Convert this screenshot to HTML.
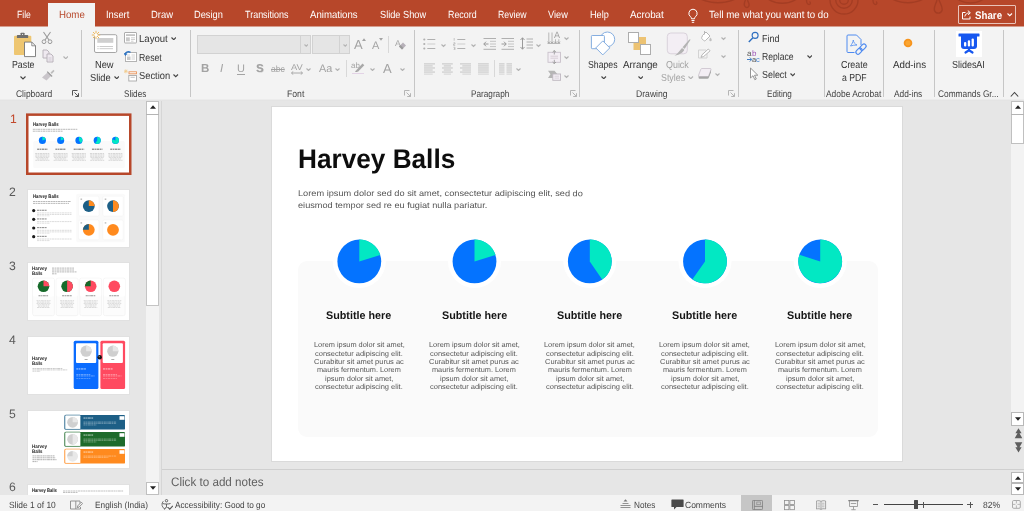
<!DOCTYPE html>
<html lang="en">
<head>
<meta charset="utf-8">
<title>Harvey Balls - PowerPoint</title>
<style>
*{box-sizing:border-box;margin:0;padding:0}
html,body{width:1024px;height:511px;overflow:hidden;background:#e6e6e6}
#app{position:relative;width:1024px;height:511px;overflow:hidden;font-family:"Liberation Sans",sans-serif;will-change:transform}
.a{position:absolute;display:block}
.x{position:absolute;white-space:pre;line-height:1;transform-origin:0 0}
</style>
</head>
<body>
<div id="app">
<div class="a" style="left:0px;top:0px;width:1024px;height:27px;background:#b7472a;"></div>
<svg class="a" style="left:640px;top:0px" width="384" height="27" viewBox="0 0 384 27"><g fill="none" stroke="#a03b22" stroke-width="1.400" opacity="0.800"><circle cx="78" cy="-38.900" r="41.600"/><path d="M105.500 0c-1.500 3-2 5.500 0 7s4-.5 3.500-3c-.3-1.500-1.300-3-1.500-4"/><circle cx="142.300" cy="-23.400" r="26.600"/><path d="M166.500 0c0 2.500 1 4.500 2.500 4.500s2-2 .5-3"/><circle cx="204" cy="0" r="14"/><circle cx="204" cy="0" r="8.300"/><circle cx="204" cy="0" r="4.300"/><path d="M233 0c0 2.500 1 4.500 2.500 4.500s2-2 .5-3"/><circle cx="267.800" cy="-31.200" r="33.900"/><path d="M297 0c-1 4-3.500 7-2.500 10.500 1 3.500 6.500 3.500 7.500 0 1-3.500-1.500-6.500-3-10.500"/><circle cx="330.500" cy="-20.500" r="23.500"/></g></svg>
<div class="a" style="left:0px;top:26px;width:1024px;height:1px;background:#d59d8e;"></div>
<div class="a" style="left:48px;top:3px;width:47px;height:25px;background:#f3f3f3;"></div>
<span class="x" style="left:16.6px;top:9.55px;font-size:10.4px;color:#fff;transform:scaleX(0.824) rotate(.03deg);">File</span>
<span class="x" style="left:58.5px;top:9.55px;font-size:10.4px;color:#b7472a;transform:scaleX(0.931) rotate(.03deg);">Home</span>
<span class="x" style="left:105.7px;top:9.55px;font-size:10.4px;color:#fff;transform:scaleX(0.896) rotate(.03deg);">Insert</span>
<span class="x" style="left:150.5px;top:9.55px;font-size:10.4px;color:#fff;transform:scaleX(0.907) rotate(.03deg);">Draw</span>
<span class="x" style="left:194.2px;top:9.55px;font-size:10.4px;color:#fff;transform:scaleX(0.890) rotate(.03deg);">Design</span>
<span class="x" style="left:244.7px;top:9.55px;font-size:10.4px;color:#fff;transform:scaleX(0.864) rotate(.03deg);">Transitions</span>
<span class="x" style="left:310.2px;top:9.55px;font-size:10.4px;color:#fff;transform:scaleX(0.926) rotate(.03deg);">Animations</span>
<span class="x" style="left:379.7px;top:9.55px;font-size:10.4px;color:#fff;transform:scaleX(0.887) rotate(.03deg);">Slide Show</span>
<span class="x" style="left:447.7px;top:9.55px;font-size:10.4px;color:#fff;transform:scaleX(0.854) rotate(.03deg);">Record</span>
<span class="x" style="left:498.2px;top:9.55px;font-size:10.4px;color:#fff;transform:scaleX(0.839) rotate(.03deg);">Review</span>
<span class="x" style="left:548.2px;top:9.55px;font-size:10.4px;color:#fff;transform:scaleX(0.886) rotate(.03deg);">View</span>
<span class="x" style="left:589.7px;top:9.55px;font-size:10.4px;color:#fff;transform:scaleX(0.880) rotate(.03deg);">Help</span>
<span class="x" style="left:630.2px;top:9.55px;font-size:10.4px;color:#fff;transform:scaleX(0.944) rotate(.03deg);">Acrobat</span>
<span class="x" style="left:708.9px;top:9.55px;font-size:10.4px;color:#fff;transform:scaleX(0.933) rotate(.03deg);">Tell me what you want to do</span>
<svg class="a" style="left:687.3px;top:7.5px" width="12" height="16" viewBox="0 0 12 16"><path d="M6 1.2a4.2 4.2 0 0 0-2.4 7.6c.6.5.9 1.2.9 2h3c0-.8.3-1.5.9-2A4.2 4.2 0 0 0 6 1.2zM4.5 12.5h3M4.8 14.3h2.4" fill="none" stroke="#fff" stroke-width="1"/></svg>
<div class="a" style="left:958px;top:5px;width:58px;height:19px;background:transparent;border:1px solid #e9c3b9;border-radius:1px"></div>
<svg class="a" style="left:962px;top:10px" width="10" height="10" viewBox="0 0 10 10"><path d="M3.500 2.500H0.500v6.500h7.500V6.500M2.800 6.500c0.500-2.200 2-3.500 4.700-3.700M5.800 0.600L8.300 2.700 6.200 5" fill="none" stroke="#fff" stroke-width="1"/></svg>
<span class="x" style="left:974.7px;top:9.75px;font-size:11px;color:#fff;font-weight:700;transform:scaleX(0.886) rotate(.03deg);">Share</span>
<svg class="a" style="left:1007px;top:13px" width="5.5" height="3.75" viewBox="-0.5 -0.5 5.5 3.75"><path d="M0 0L2.25 2.25L4.5 0" fill="none" stroke="#fff" stroke-width="1.1"/></svg>
<div class="a" style="left:0px;top:27px;width:1024px;height:72px;background:#f3f3f3;"></div>
<div class="a" style="left:0px;top:99px;width:1024px;height:1px;background:#ececec;"></div>
<div class="a" style="left:81px;top:30px;width:1px;height:67px;background:#c6c6c6;"></div>
<div class="a" style="left:190px;top:30px;width:1px;height:67px;background:#c6c6c6;"></div>
<div class="a" style="left:414px;top:30px;width:1px;height:67px;background:#c6c6c6;"></div>
<div class="a" style="left:579px;top:30px;width:1px;height:67px;background:#c6c6c6;"></div>
<div class="a" style="left:738px;top:30px;width:1px;height:67px;background:#c6c6c6;"></div>
<div class="a" style="left:824px;top:30px;width:1px;height:67px;background:#c6c6c6;"></div>
<div class="a" style="left:883px;top:30px;width:1px;height:67px;background:#c6c6c6;"></div>
<div class="a" style="left:934px;top:30px;width:1px;height:67px;background:#c6c6c6;"></div>
<div class="a" style="left:1003px;top:30px;width:1px;height:67px;background:#c6c6c6;"></div>
<span class="x" style="left:15.7px;top:88.95px;font-size:9.6px;color:#444;transform:scaleX(0.884) rotate(.03deg);">Clipboard</span>
<span class="x" style="left:124.2px;top:88.95px;font-size:9.6px;color:#444;transform:scaleX(0.853) rotate(.03deg);">Slides</span>
<span class="x" style="left:286.7px;top:88.95px;font-size:9.6px;color:#444;transform:scaleX(0.901) rotate(.03deg);">Font</span>
<span class="x" style="left:470.7px;top:88.95px;font-size:9.6px;color:#444;transform:scaleX(0.855) rotate(.03deg);">Paragraph</span>
<span class="x" style="left:636.2px;top:88.95px;font-size:9.6px;color:#444;transform:scaleX(0.898) rotate(.03deg);">Drawing</span>
<span class="x" style="left:767.4px;top:88.95px;font-size:9.6px;color:#444;transform:scaleX(0.849) rotate(.03deg);">Editing</span>
<span class="x" style="left:825.5px;top:88.95px;font-size:9.6px;color:#444;transform:scaleX(0.878) rotate(.03deg);">Adobe Acrobat</span>
<span class="x" style="left:894.0px;top:88.95px;font-size:9.6px;color:#444;transform:scaleX(0.870) rotate(.03deg);">Add-ins</span>
<span class="x" style="left:937.7px;top:88.95px;font-size:9.6px;color:#444;transform:scaleX(0.868) rotate(.03deg);">Commands Gr...</span>
<svg class="a" style="left:72px;top:90px" width="7" height="7" viewBox="0 0 7 7"><path d="M0.500 5.500V0.500H5.500M2.500 2.500L6 6M6.500 3.200V6.500H3.200" fill="none" stroke="#555" stroke-width="1"/><path d="M6.800 4V6.800H4z" fill="#555"/></svg>
<svg class="a" style="left:404.3px;top:90px" width="7" height="7" viewBox="0 0 7 7"><path d="M0.500 5.500V0.500H5.500M2.500 2.500L6 6M6.500 3.200V6.500H3.200" fill="none" stroke="#b5b5b5" stroke-width="1"/><path d="M6.800 4V6.800H4z" fill="#b5b5b5"/></svg>
<svg class="a" style="left:569.5px;top:90px" width="7" height="7" viewBox="0 0 7 7"><path d="M0.500 5.500V0.500H5.500M2.500 2.500L6 6M6.500 3.200V6.500H3.200" fill="none" stroke="#b5b5b5" stroke-width="1"/><path d="M6.800 4V6.800H4z" fill="#b5b5b5"/></svg>
<svg class="a" style="left:728px;top:90px" width="7" height="7" viewBox="0 0 7 7"><path d="M0.500 5.500V0.500H5.500M2.500 2.500L6 6M6.500 3.200V6.500H3.200" fill="none" stroke="#b5b5b5" stroke-width="1"/><path d="M6.800 4V6.800H4z" fill="#b5b5b5"/></svg>
<svg class="a" style="left:1010px;top:91px" width="9" height="7" viewBox="0 0 9 7"><path d="M0.8 5.5L4.5 1.5L8.2 5.5" fill="none" stroke="#444" stroke-width="1.1"/></svg>
<svg class="a" style="left:13px;top:31.5px" width="24" height="27" viewBox="0 0 24 27"><rect x="1" y="3.700" width="17.300" height="19.400" rx="1" fill="#eec671"/><rect x="3.900" y="3.100" width="11.300" height="3" rx="0.600" fill="#6e6e6e"/><rect x="7.600" y="0.700" width="3.900" height="3" rx="0.600" fill="#6e6e6e"/><rect x="9" y="1.900" width="1.100" height="1.100" fill="#e8e8e8"/><path d="M11.500 10.100h7.300l3.700 3.700v10.800h-11z" fill="#fff" stroke="#757575" stroke-width="0.900"/><path d="M18.800 10.100v3.700h3.700" fill="none" stroke="#757575" stroke-width="0.800"/></svg>
<span class="x" style="left:11.7px;top:59.65px;font-size:10.2px;color:#333;transform:scaleX(0.863) rotate(.03deg);">Paste</span>
<svg class="a" style="left:19.5px;top:75.5px" width="6" height="4.0" viewBox="-0.5 -0.5 6 4.0"><path d="M0 0L2.5 2.5L5 0" fill="none" stroke="#444" stroke-width="1.1"/></svg>
<svg class="a" style="left:41px;top:31px" width="12" height="14" viewBox="0 0 12 14"><path d="M2.5 1L8 9M9.5 1L4 9" stroke="#9a9a9a" stroke-width="1.1" fill="none"/><circle cx="3" cy="10.7" r="1.9" fill="none" stroke="#9a9a9a" stroke-width="1"/><circle cx="9" cy="10.7" r="1.9" fill="none" stroke="#9a9a9a" stroke-width="1"/></svg>
<svg class="a" style="left:42px;top:49px" width="12" height="14" viewBox="0 0 12 14"><path d="M1 1h4l2 2v6H1z" fill="#efe9f0" stroke="#b4aeb6" stroke-width="0.9"/><path d="M5 5h4l2 2v6H5z" fill="#efe9f0" stroke="#b4aeb6" stroke-width="0.9"/><path d="M6.5 9h3M6.5 11h3" stroke="#c4bec6" stroke-width="0.7"/></svg>
<svg class="a" style="left:62.5px;top:55.5px" width="5.5" height="3.75" viewBox="-0.5 -0.5 5.5 3.75"><path d="M0 0L2.25 2.25L4.5 0" fill="none" stroke="#b2b2b2" stroke-width="1.1"/></svg>
<svg class="a" style="left:41px;top:69px" width="14" height="12" viewBox="0 0 14 12"><path d="M9.5 3.5L12.5 0.8L13.5 2L10.8 5z" fill="#bdbdbd"/><path d="M1 8.5L7 3l3.5 3.5L5.5 11.5z" fill="#c9c5ca"/><path d="M6.2 2.6l4.9 4.9" stroke="#9c9c9c" stroke-width="1.2"/></svg>
<svg class="a" style="left:91px;top:30px" width="27" height="24" viewBox="0 0 27 24"><rect x="3.500" y="4.700" width="22.300" height="17.800" rx="1.500" fill="#fff" stroke="#a6a6a6" stroke-width="1"/><rect x="6.300" y="8" width="16" height="4.800" fill="#cfcfcf"/><path d="M8.500 16.500h13.500M8.500 18.700h13.500" stroke="#c6c6c6" stroke-width="0.900"/><path d="M6.500 16.500h1M6.500 18.700h1" stroke="#b0b0b0" stroke-width="0.900"/><g stroke="#efb85a" stroke-width="1"><path d="M5 0.800v8.400M0.800 5h8.400M2 2l6 6M8 2l-6 6"/></g><circle cx="5" cy="5" r="1.700" fill="#fff"/></svg>
<span class="x" style="left:95.2px;top:59.65px;font-size:10.2px;color:#333;transform:scaleX(0.912) rotate(.03deg);">New</span>
<span class="x" style="left:89.7px;top:72.65px;font-size:10.2px;color:#333;transform:scaleX(0.909) rotate(.03deg);">Slide</span>
<svg class="a" style="left:113.5px;top:75.5px" width="5.5" height="3.75" viewBox="-0.5 -0.5 5.5 3.75"><path d="M0 0L2.25 2.25L4.5 0" fill="none" stroke="#444" stroke-width="1.1"/></svg>
<svg class="a" style="left:124px;top:32px" width="13" height="12" viewBox="0 0 13 12"><rect x="0.500" y="0.500" width="12" height="10.500" rx="0.500" fill="#fff" stroke="#adadad"/><rect x="2" y="2.200" width="9" height="1.800" fill="#c4c4c4"/><rect x="2" y="5.300" width="3.800" height="4" fill="#c9c9c9"/><path d="M7 5.800h4M7 7.500h4M7 9.200h2.500" stroke="#c4c4c4" stroke-width="0.800"/></svg>
<span class="x" style="left:138.7px;top:33.65px;font-size:10.2px;color:#333;transform:scaleX(0.941) rotate(.03deg);">Layout</span>
<svg class="a" style="left:170.5px;top:36.5px" width="5.5" height="3.75" viewBox="-0.5 -0.5 5.5 3.75"><path d="M0 0L2.25 2.25L4.5 0" fill="none" stroke="#444" stroke-width="1.1"/></svg>
<svg class="a" style="left:124px;top:50px" width="13" height="13" viewBox="0 0 13 13"><rect x="1.500" y="2.500" width="11" height="9" fill="#fff" stroke="#b3b3b3"/><rect x="3" y="6.500" width="3.500" height="3.500" fill="#c9c9c9"/><path d="M7.500 5h3.500M7.500 7h3.500M7.500 9h3.500M3 5h3" stroke="#c9c9c9" stroke-width="0.800"/><path d="M1.200 5C1.200 2.500 3.800 0.800 6.500 2.300" fill="none" stroke="#2b73c4" stroke-width="1.400"/><path d="M-0.300 3l1.600 3 2.200-2.300z" fill="#2b73c4"/></svg>
<span class="x" style="left:138.7px;top:52.65px;font-size:10.2px;color:#333;transform:scaleX(0.856) rotate(.03deg);">Reset</span>
<svg class="a" style="left:124px;top:68.5px" width="13" height="13" viewBox="0 0 13 13"><rect x="5" y="2.800" width="7.500" height="2" fill="#fff" stroke="#e8935a" stroke-width="0.900"/><path d="M0.300 0.800l3 3M3.300 0.800l-3 3M1.800 0.300v4M-0.200 2.300h4" stroke="#f0c987" stroke-width="0.700"/><rect x="4.800" y="6.500" width="7.700" height="5.500" fill="#fff" stroke="#a8a8a8" stroke-width="0.900"/><path d="M6.500 8.300h4.300" stroke="#c4c4c4" stroke-width="1"/></svg>
<span class="x" style="left:138.7px;top:70.65px;font-size:10.2px;color:#333;transform:scaleX(0.915) rotate(.03deg);">Section</span>
<svg class="a" style="left:173px;top:74px" width="5.5" height="3.75" viewBox="-0.5 -0.5 5.5 3.75"><path d="M0 0L2.25 2.25L4.5 0" fill="none" stroke="#444" stroke-width="1.1"/></svg>
<div class="a" style="left:197px;top:35px;width:114px;height:19px;background:#e5e5e5;border:1px solid #d2d2d2"></div>
<div class="a" style="left:300px;top:36px;width:1px;height:17px;background:#d2d2d2;"></div>
<svg class="a" style="left:303.5px;top:43.5px" width="4.5" height="3.25" viewBox="-0.5 -0.5 4.5 3.25"><path d="M0 0L1.75 1.75L3.5 0" fill="none" stroke="#b5b5b5" stroke-width="1.1"/></svg>
<div class="a" style="left:312px;top:35px;width:37.5px;height:19px;background:#e5e5e5;border:1px solid #d2d2d2"></div>
<div class="a" style="left:339px;top:36px;width:1px;height:17px;background:#d2d2d2;"></div>
<svg class="a" style="left:342.5px;top:43.5px" width="4.5" height="3.25" viewBox="-0.5 -0.5 4.5 3.25"><path d="M0 0L1.75 1.75L3.5 0" fill="none" stroke="#b5b5b5" stroke-width="1.1"/></svg>
<span class="x" style="left:353.7px;top:38.25px;font-size:13px;color:#a3a3a3;transform:scaleX(1.000) rotate(.03deg);">A</span>
<svg class="a" style="left:361.5px;top:37.5px" width="4" height="3" viewBox="0 0 4 3"><path d="M0 3L2 0.3L4 3z" fill="#a3a3a3"/></svg>
<span class="x" style="left:371.7px;top:39.75px;font-size:11px;color:#a3a3a3;transform:scaleX(1.000) rotate(.03deg);">A</span>
<svg class="a" style="left:378.5px;top:37.5px" width="4" height="3" viewBox="0 0 4 3"><path d="M0 0L2 2.7L4 0z" fill="#a3a3a3"/></svg>
<div class="a" style="left:388px;top:36px;width:1px;height:17px;background:#d8d8d8;"></div>
<span class="x" style="left:394.7px;top:39.00px;font-size:8.5px;color:#a3a3a3;transform:scaleX(1.000) rotate(.03deg);">A</span>
<svg class="a" style="left:398px;top:41px" width="9" height="9" viewBox="0 0 9 9"><path d="M1 5.5L5 1.5L8 4.5L4 8.5z" fill="#b7b1b9"/><path d="M1 5.5L2.5 4L5.5 7L4 8.5z" fill="#9a9a9a"/></svg>
<span class="x" style="left:200.7px;top:62.50px;font-size:11.5px;color:#a3a3a3;font-weight:700;transform:scaleX(1.000) rotate(.03deg);">B</span>
<span class="x" style="left:220.2px;top:62.50px;font-size:11.5px;color:#a3a3a3;font-style:italic;transform:scaleX(1.000) rotate(.03deg);">I</span>
<span class="x" style="left:237.2px;top:62.75px;font-size:11px;color:#a3a3a3;transform:scaleX(1.000) rotate(.03deg);border-bottom:1px solid #a3a3a3;padding-bottom:0.4px;">U</span>
<span class="x" style="left:255.7px;top:62.50px;font-size:11.5px;color:#a3a3a3;font-weight:700;transform:scaleX(1.000) rotate(.03deg);text-shadow:0.6px 0.6px 0 #cfcfcf;">S</span>
<span class="x" style="left:270.7px;top:64.75px;font-size:9px;color:#a3a3a3;transform:scaleX(0.951) rotate(.03deg);text-decoration:line-through;">abc</span>
<span class="x" style="left:290.7px;top:63.00px;font-size:8.5px;color:#a3a3a3;transform:scaleX(1.101) rotate(.03deg);">AV</span>
<svg class="a" style="left:291px;top:70.5px" width="12" height="4" viewBox="0 0 12 4"><path d="M0.5 2h11M2.3 0.3L0.5 2l1.8 1.7M9.7 0.3l1.8 1.7-1.8 1.7" fill="none" stroke="#a3a3a3" stroke-width="0.9"/></svg>
<svg class="a" style="left:305.5px;top:67.5px" width="5" height="3.5" viewBox="-0.5 -0.5 5 3.5"><path d="M0 0L2.0 2.0L4 0" fill="none" stroke="#b2b2b2" stroke-width="1.1"/></svg>
<span class="x" style="left:318.7px;top:62.75px;font-size:11px;color:#a3a3a3;transform:scaleX(0.987) rotate(.03deg);">Aa</span>
<svg class="a" style="left:334.5px;top:67.5px" width="5" height="3.5" viewBox="-0.5 -0.5 5 3.5"><path d="M0 0L2.0 2.0L4 0" fill="none" stroke="#b2b2b2" stroke-width="1.1"/></svg>
<div class="a" style="left:346px;top:60px;width:1px;height:17px;background:#d8d8d8;"></div>
<span class="x" style="left:351.2px;top:61.75px;font-size:8px;color:#a3a3a3;transform:scaleX(0.988) rotate(.03deg);">ab</span>
<svg class="a" style="left:354px;top:62px" width="11" height="10" viewBox="0 0 11 10"><path d="M2 8.5L8.5 1.5L10.3 3.2L4 9.8z" fill="#a8a8a8"/><path d="M1 9.8l1-1.3 2 1.3z" fill="#888"/></svg>
<div class="a" style="left:352px;top:73px;width:12px;height:1px;background:#e3d3e6;"></div>
<svg class="a" style="left:369.5px;top:67.5px" width="5" height="3.5" viewBox="-0.5 -0.5 5 3.5"><path d="M0 0L2.0 2.0L4 0" fill="none" stroke="#b2b2b2" stroke-width="1.1"/></svg>
<span class="x" style="left:382.7px;top:62.25px;font-size:13px;color:#a3a3a3;transform:scaleX(1.000) rotate(.03deg);">A</span>
<svg class="a" style="left:400px;top:67.5px" width="5" height="3.5" viewBox="-0.5 -0.5 5 3.5"><path d="M0 0L2.0 2.0L4 0" fill="none" stroke="#b2b2b2" stroke-width="1.1"/></svg>
<svg class="a" style="left:423px;top:37px" width="14" height="13" viewBox="0 0 14 13"><g fill="#b0b0b0"><circle cx="1.300" cy="2.500" r="1.100"/><circle cx="1.300" cy="7" r="1.100"/><circle cx="1.300" cy="11.500" r="1.100"/></g><path d="M4.300 2.500H12.300M4.300 11.500H12.300" stroke="#b0b0b0" stroke-width="1"/><path d="M4.300 7H12.300" stroke="#cdcdcd" stroke-width="1"/></svg>
<svg class="a" style="left:441px;top:44px" width="5" height="3.5" viewBox="-0.5 -0.5 5 3.5"><path d="M0 0L2.0 2.0L4 0" fill="none" stroke="#b2b2b2" stroke-width="1.1"/></svg>
<svg class="a" style="left:453px;top:37px" width="14" height="13" viewBox="0 0 14 13"><path d="M1.200 1v2.700M0.500 5.800h1.500v1.300h-1.500v1.300h1.700M0.500 10.300h1.500v1.300h-1M2 11.600v1.200H0.500" fill="none" stroke="#b0b0b0" stroke-width="0.700"/><path d="M4.300 2.500H12.300M4.300 11.500H12.300" stroke="#b0b0b0" stroke-width="1"/><path d="M4.300 7H12.300" stroke="#cdcdcd" stroke-width="1"/></svg>
<svg class="a" style="left:471px;top:44px" width="5" height="3.5" viewBox="-0.5 -0.5 5 3.5"><path d="M0 0L2.0 2.0L4 0" fill="none" stroke="#b2b2b2" stroke-width="1.1"/></svg>
<svg class="a" style="left:483px;top:37px" width="14" height="13" viewBox="0 0 14 13"><path d="M0.500 1.500H13M0.500 12.300H13" stroke="#b0b0b0" stroke-width="1"/><path d="M7 4.300H13M7 7H13M7 9.600H13" stroke="#c4c4c4" stroke-width="1"/><path d="M5.500 7H0.800M3 4.700L0.800 7L3 9.300" fill="none" stroke="#9a9a9a" stroke-width="1"/></svg>
<svg class="a" style="left:501px;top:37px" width="14" height="13" viewBox="0 0 14 13"><path d="M0.500 1.500H13M0.500 12.300H13" stroke="#b0b0b0" stroke-width="1"/><path d="M7 4.300H13M7 7H13M7 9.600H13" stroke="#c4c4c4" stroke-width="1"/><path d="M0.500 7H5.200M3 4.700L5.200 7L3 9.300" fill="none" stroke="#9a9a9a" stroke-width="1"/></svg>
<svg class="a" style="left:520px;top:37px" width="14" height="13" viewBox="0 0 14 13"><path d="M6.5 2H13M6.5 5H13M6.5 8H13M6.5 11H13" stroke="#b0b0b0" stroke-width="1"/><path d="M2.5 0.8V12.2M0.5 3L2.5 0.8L4.5 3M0.5 10L2.5 12.2L4.5 10" fill="none" stroke="#9a9a9a" stroke-width="1"/></svg>
<svg class="a" style="left:536px;top:44px" width="5" height="3.5" viewBox="-0.5 -0.5 5 3.5"><path d="M0 0L2.0 2.0L4 0" fill="none" stroke="#b2b2b2" stroke-width="1.1"/></svg>
<svg class="a" style="left:547px;top:31px" width="14" height="14" viewBox="0 0 14 14"><path d="M1.800 1.500V12M5 1.500V12M8.500 8.300V12M11.800 8.300V12" stroke="#b0b0b0" stroke-width="0.900"/><path d="M0.500 12.400H13.200" stroke="#a8a8a8" stroke-width="0.900"/><path d="M0.600 10.600l1.200 1.500 1.200-1.500M3.800 10.600l1.200 1.500 1.200-1.500M7.300 10.600l1.200 1.500 1.200-1.500M10.600 10.600l1.200 1.500 1.200-1.500" fill="none" stroke="#a0a0a0" stroke-width="0.800"/></svg>
<span class="x" style="left:554.0px;top:30.75px;font-size:9px;color:#a3a3a3;transform:scaleX(1.000) rotate(.03deg);">A</span>
<svg class="a" style="left:564px;top:37px" width="5" height="3.5" viewBox="-0.5 -0.5 5 3.5"><path d="M0 0L2.0 2.0L4 0" fill="none" stroke="#b2b2b2" stroke-width="1.1"/></svg>
<svg class="a" style="left:547px;top:49.5px" width="14" height="14" viewBox="0 0 14 14"><rect x="1" y="2.300" width="12.500" height="10" fill="#f3eef4" stroke="#c9c1cb" stroke-width="0.900"/><path d="M7.300 0.500V4.500M5.600 2.200L7.300 0.500l1.700 1.700M7.300 13.700V9.800M5.600 12L7.300 13.700l1.700-1.700" fill="none" stroke="#9c9c9c" stroke-width="0.900"/><path d="M3.500 6.200H11M3.500 8.200H11" stroke="#cfc8d1" stroke-width="0.800"/></svg>
<svg class="a" style="left:564px;top:56px" width="5" height="3.5" viewBox="-0.5 -0.5 5 3.5"><path d="M0 0L2.0 2.0L4 0" fill="none" stroke="#b2b2b2" stroke-width="1.1"/></svg>
<svg class="a" style="left:547px;top:70px" width="14" height="11" viewBox="0 0 14 11"><path d="M1 0.800H7.500L10.500 4.300L7.500 8H1L3.500 4.300z" fill="#b5b5b5"/><rect x="5.800" y="4" width="7.800" height="6.300" fill="#f3eef4" stroke="#bdb6bf" stroke-width="0.900"/><path d="M7.500 6.200h4.500M7.500 8.100h4.500" stroke="#cfc8d1" stroke-width="0.700"/></svg>
<svg class="a" style="left:564px;top:75px" width="5" height="3.5" viewBox="-0.5 -0.5 5 3.5"><path d="M0 0L2.0 2.0L4 0" fill="none" stroke="#b2b2b2" stroke-width="1.1"/></svg>
<svg class="a" style="left:424px;top:63px" width="14" height="12" viewBox="0 0 14 12"><path d="M0 0.90H11" stroke="#b4b4b4" stroke-width="0.75"/><path d="M0 2.94H8.7" stroke="#b4b4b4" stroke-width="0.75"/><path d="M0 4.98H11" stroke="#b4b4b4" stroke-width="0.75"/><path d="M0 7.02H8.7" stroke="#b4b4b4" stroke-width="0.75"/><path d="M0 9.06H11" stroke="#b4b4b4" stroke-width="0.75"/><path d="M0 11.10H8.7" stroke="#cacaca" stroke-width="0.75"/></svg>
<svg class="a" style="left:442px;top:63px" width="14" height="12" viewBox="0 0 14 12"><path d="M0 0.90H10.8" stroke="#b4b4b4" stroke-width="0.75"/><path d="M1.8 2.94H9" stroke="#b4b4b4" stroke-width="0.75"/><path d="M0 4.98H10.8" stroke="#b4b4b4" stroke-width="0.75"/><path d="M1.8 7.02H9" stroke="#b4b4b4" stroke-width="0.75"/><path d="M0 9.06H10.8" stroke="#b4b4b4" stroke-width="0.75"/><path d="M1.8 11.10H9" stroke="#cacaca" stroke-width="0.75"/></svg>
<svg class="a" style="left:460px;top:63px" width="14" height="12" viewBox="0 0 14 12"><path d="M0 0.90H11" stroke="#b4b4b4" stroke-width="0.75"/><path d="M2.3 2.94H11" stroke="#b4b4b4" stroke-width="0.75"/><path d="M0 4.98H11" stroke="#b4b4b4" stroke-width="0.75"/><path d="M2.3 7.02H11" stroke="#b4b4b4" stroke-width="0.75"/><path d="M0 9.06H11" stroke="#b4b4b4" stroke-width="0.75"/><path d="M2.3 11.10H11" stroke="#cacaca" stroke-width="0.75"/></svg>
<svg class="a" style="left:478.2px;top:63px" width="14" height="12" viewBox="0 0 14 12"><path d="M0 0.90H10.8" stroke="#b4b4b4" stroke-width="0.75"/><path d="M0 2.94H10.8" stroke="#b4b4b4" stroke-width="0.75"/><path d="M0 4.98H10.8" stroke="#b4b4b4" stroke-width="0.75"/><path d="M0 7.02H10.8" stroke="#b4b4b4" stroke-width="0.75"/><path d="M0 9.06H10.8" stroke="#b4b4b4" stroke-width="0.75"/><path d="M0 11.10H10.8" stroke="#cacaca" stroke-width="0.75"/></svg>
<div class="a" style="left:494px;top:60px;width:1px;height:17px;background:#d8d8d8;"></div>
<svg class="a" style="left:499px;top:63px" width="14" height="12" viewBox="0 0 14 12"><path d="M0 0.90H5.500M7.500 0.90H13" stroke="#b4b4b4" stroke-width="0.75"/><path d="M0 2.94H5.500M7.500 2.94H13" stroke="#b4b4b4" stroke-width="0.75"/><path d="M0 4.98H5.500M7.500 4.98H13" stroke="#b4b4b4" stroke-width="0.75"/><path d="M0 7.02H5.500M7.500 7.02H13" stroke="#b4b4b4" stroke-width="0.75"/><path d="M0 9.06H5.500M7.500 9.06H13" stroke="#b4b4b4" stroke-width="0.75"/><path d="M0 11.10H5.500M7.500 11.10H13" stroke="#cacaca" stroke-width="0.75"/></svg>
<svg class="a" style="left:515.5px;top:67.5px" width="5" height="3.5" viewBox="-0.5 -0.5 5 3.5"><path d="M0 0L2.0 2.0L4 0" fill="none" stroke="#b2b2b2" stroke-width="1.1"/></svg>
<svg class="a" style="left:590px;top:30px" width="26" height="26" viewBox="0 0 26 26"><g fill="#fff" stroke="#85aee0" stroke-width="1"><circle cx="17.400" cy="9.300" r="7.300"/><rect x="1.400" y="5.500" width="13" height="13.200" rx="0.800"/><path d="M5.800 17.900L12.800 10.900L19.800 17.900L12.800 24.900z"/></g></svg>
<span class="x" style="left:588.4px;top:59.65px;font-size:10.2px;color:#333;transform:scaleX(0.856) rotate(.03deg);">Shapes</span>
<svg class="a" style="left:601px;top:75.5px" width="5.5" height="3.75" viewBox="-0.5 -0.5 5.5 3.75"><path d="M0 0L2.25 2.25L4.5 0" fill="none" stroke="#444" stroke-width="1.1"/></svg>
<svg class="a" style="left:628px;top:31px" width="24" height="25" viewBox="0 0 24 25"><rect x="5.500" y="6" width="12.500" height="13" fill="#edc373"/><rect x="0.500" y="1.500" width="10" height="10" fill="#fff" stroke="#adadad"/><rect x="12.500" y="13.500" width="10" height="10" fill="#fff" stroke="#adadad"/></svg>
<span class="x" style="left:622.7px;top:59.65px;font-size:10.2px;color:#333;transform:scaleX(0.960) rotate(.03deg);">Arrange</span>
<svg class="a" style="left:637.5px;top:75.5px" width="5.5" height="3.75" viewBox="-0.5 -0.5 5.5 3.75"><path d="M0 0L2.25 2.25L4.5 0" fill="none" stroke="#444" stroke-width="1.1"/></svg>
<svg class="a" style="left:665px;top:31px" width="27" height="26" viewBox="0 0 27 26"><rect x="2.300" y="2" width="20" height="20.800" rx="3.500" fill="#f3eef4" stroke="#d9d2db" stroke-width="1"/><path d="M25.600 8.600L19.500 18.200L17.300 16.600L24.300 8.500z" fill="#b3b3b3"/><path d="M17 17l2.300 1.700c-.8 2.300-4.300 5-9.800 6 3.500-2.200 5-5.200 7.500-7.700z" fill="#b3b3b3"/><path d="M17.300 16.400l2.600 1.900" stroke="#f3f3f3" stroke-width="0.700"/></svg>
<span class="x" style="left:665.7px;top:59.65px;font-size:10.2px;color:#a3a3a3;transform:scaleX(0.875) rotate(.03deg);">Quick</span>
<span class="x" style="left:660.7px;top:72.65px;font-size:10.2px;color:#a3a3a3;transform:scaleX(0.868) rotate(.03deg);">Styles</span>
<svg class="a" style="left:688px;top:75.5px" width="5.5" height="3.75" viewBox="-0.5 -0.5 5.5 3.75"><path d="M0 0L2.25 2.25L4.5 0" fill="none" stroke="#b2b2b2" stroke-width="1.1"/></svg>
<svg class="a" style="left:699px;top:30px" width="13" height="13" viewBox="0 0 13 13"><path d="M3.5 5.5L7 2l4 4-4.500 4.500c-.5.500-1.300.500-1.800 0L3 8.800c-.5-.5-.5-1.300 0-1.800z" fill="#fff" stroke="#b0b0b0" stroke-width="0.9"/><path d="M5.500 1v3.500" stroke="#b0b0b0" stroke-width="0.9"/><path d="M11.500 7.500c.7 1 1.200 1.800 1.200 2.500a1.200 1.200 0 0 1-2.400 0c0-.7.500-1.500 1.200-2.500z" fill="#c0c0c0"/></svg>
<svg class="a" style="left:720.5px;top:37px" width="5" height="3.5" viewBox="-0.5 -0.5 5 3.5"><path d="M0 0L2.0 2.0L4 0" fill="none" stroke="#b2b2b2" stroke-width="1.1"/></svg>
<svg class="a" style="left:698px;top:48px" width="14" height="12" viewBox="0 0 14 12"><path d="M8 2H0.500V10H9V5.500" fill="none" stroke="#cfcfcf" stroke-width="0.900"/><path d="M3 9.300L4 6.800L10.300 1l1.800 1.800L5.700 8.500z" fill="#fff" stroke="#b0b0b0" stroke-width="0.900"/></svg>
<svg class="a" style="left:720.5px;top:55px" width="5" height="3.5" viewBox="-0.5 -0.5 5 3.5"><path d="M0 0L2.0 2.0L4 0" fill="none" stroke="#b2b2b2" stroke-width="1.1"/></svg>
<svg class="a" style="left:698px;top:67px" width="15" height="13" viewBox="0 0 15 13"><path d="M3.800 1.500h8.200a1 1 0 0 1 1 1.300L10.800 8.500a1.500 1.500 0 0 1-1.400 1H1.500a1 1 0 0 1-.9-1.300L2.800 2.300a1.300 1.300 0 0 1 1-.8z" fill="#f3eef4" stroke="#c9c2cb" stroke-width="0.800"/><path d="M0.600 8.500c0 .6.400 1 .9 1h7.900a1.500 1.500 0 0 0 1.400-1L13 2.800v2.400l-2.200 5.500a1.500 1.500 0 0 1-1.400 1H1.500a1 1 0 0 1-.9-1z" fill="#a6a6a6"/></svg>
<svg class="a" style="left:714.5px;top:73px" width="5" height="3.5" viewBox="-0.5 -0.5 5 3.5"><path d="M0 0L2.0 2.0L4 0" fill="none" stroke="#b2b2b2" stroke-width="1.1"/></svg>
<svg class="a" style="left:747px;top:31px" width="12" height="13" viewBox="0 0 12 13"><circle cx="8.100" cy="4.400" r="3" fill="none" stroke="#2e6fc0" stroke-width="1.100"/><path d="M5.900 6.700L1.800 11" stroke="#2e6fc0" stroke-width="1.400"/></svg>
<span class="x" style="left:762.1px;top:33.65px;font-size:10.2px;color:#333;transform:scaleX(0.878) rotate(.03deg);">Find</span>
<span class="x" style="left:747.0px;top:49.75px;font-size:8px;color:#555;transform:scaleX(1.000) rotate(.03deg);">a</span>
<span class="x" style="left:751.5px;top:49.75px;font-size:8px;color:#9b4fb5;transform:scaleX(1.000) rotate(.03deg);">b</span>
<span class="x" style="left:752.2px;top:56.00px;font-size:7.5px;color:#555;transform:scaleX(1.000) rotate(.03deg);">a</span>
<span class="x" style="left:756.3px;top:56.00px;font-size:7.5px;color:#3b7fd4;transform:scaleX(1.000) rotate(.03deg);">c</span>
<svg class="a" style="left:746.5px;top:57px" width="6" height="5" viewBox="0 0 6 5"><path d="M0 2.500h4.500M2.800 0.500l2 2-2 2" fill="none" stroke="#2e6fc0" stroke-width="0.9"/></svg>
<span class="x" style="left:762.3px;top:51.65px;font-size:10.2px;color:#333;transform:scaleX(0.842) rotate(.03deg);">Replace</span>
<svg class="a" style="left:806.5px;top:55px" width="5.5" height="3.75" viewBox="-0.5 -0.5 5.5 3.75"><path d="M0 0L2.25 2.25L4.5 0" fill="none" stroke="#444" stroke-width="1.1"/></svg>
<svg class="a" style="left:749px;top:67px" width="10" height="14" viewBox="0 0 10 14"><path d="M1.500 1v10l2.500-2.300 1.800 4 1.500-.7-1.800-3.800h3.300z" fill="#fff" stroke="#8a8a8a" stroke-width="0.9" stroke-linejoin="round"/></svg>
<span class="x" style="left:761.7px;top:69.65px;font-size:10.2px;color:#333;transform:scaleX(0.875) rotate(.03deg);">Select</span>
<svg class="a" style="left:789.5px;top:73px" width="5.5" height="3.75" viewBox="-0.5 -0.5 5.5 3.75"><path d="M0 0L2.25 2.25L4.5 0" fill="none" stroke="#444" stroke-width="1.1"/></svg>
<svg class="a" style="left:846px;top:33.5px" width="24" height="25" viewBox="0 0 24 25"><path d="M2 1h8.500l4.500 4.500v5.500M1 2v15.500a1 1 0 0 0 1 1h6.500" fill="none" stroke="#4f8bf0" stroke-width="1" stroke-linejoin="round"/><path d="M2 1a1 1 0 0 0-1 1" fill="none" stroke="#4f8bf0"/><path d="M4.500 12c1.500-2 2.500-4 2.800-6 .2 2.500 1.700 4.300 3.700 5-2.500 0-4.500.4-6.500 1z" fill="none" stroke="#4f8bf0" stroke-width="0.800"/><g fill="none" stroke="#4f8bf0" stroke-width="1.200"><rect x="9.500" y="15" width="7" height="4.200" rx="2.100" transform="rotate(-45 13 17.100)"/><rect x="13.500" y="11" width="7" height="4.200" rx="2.100" transform="rotate(-45 17 13.100)"/></g></svg>
<span class="x" style="left:840.7px;top:59.65px;font-size:10.2px;color:#333;transform:scaleX(0.870) rotate(.03deg);">Create</span>
<span class="x" style="left:841.7px;top:72.65px;font-size:10.2px;color:#333;transform:scaleX(0.852) rotate(.03deg);">a PDF</span>
<svg class="a" style="left:903px;top:38px" width="10" height="10" viewBox="0 0 10 10"><circle cx="5" cy="5" r="4.300" fill="#f7941d"/><circle cx="5" cy="5" r="2.500" fill="#fbb040" opacity="0.6"/></svg>
<span class="x" style="left:892.7px;top:59.65px;font-size:10.2px;color:#333;transform:scaleX(0.958) rotate(.03deg);">Add-ins</span>
<svg class="a" style="left:956px;top:31px" width="26" height="26" viewBox="0 0 26 26"><rect x="0" y="0" width="26" height="26" fill="#fff"/><rect x="2.500" y="2.500" width="21" height="3" rx="0.500" fill="#1657f0"/><path d="M5 5h16v10a3 3 0 0 1-3 3h-10a3 3 0 0 1-3-3z" fill="#1657f0"/><rect x="8" y="11" width="2.300" height="4.500" rx="1.100" fill="#fff"/><rect x="11.800" y="9.300" width="2.300" height="6.200" rx="1.100" fill="#fff"/><rect x="15.600" y="7.500" width="2.300" height="8" rx="1.100" fill="#fff"/><path d="M13 18v1.500M13 19.300l-3.500 2.200M13 19.300l3.500 2.200" stroke="#1657f0" stroke-width="2.200" stroke-linecap="round"/></svg>
<span class="x" style="left:952.0px;top:59.65px;font-size:10.2px;color:#333;transform:scaleX(0.878) rotate(.03deg);">SlidesAI</span>
<div class="a" style="left:0px;top:100px;width:1024px;height:395px;background:#e6e6e6;"></div>
<div class="a" style="left:0px;top:100px;width:1024px;height:1px;background:#e4e4e4;"></div>
<div class="a" style="left:146px;top:101px;width:13px;height:393px;background:#f3f3f3;"></div>
<div class="a" style="left:146px;top:101px;width:13px;height:13.5px;background:#fff;border:1px solid #c0c0c0;border-bottom-color:#a8a8a8"></div>
<svg class="a" style="left:150px;top:105.3px" width="6" height="4" viewBox="0 0 6 4"><path d="M0 3.700L3 0.300L6 3.700z" fill="#222"/></svg>
<div class="a" style="left:146px;top:114px;width:13px;height:192px;background:#fff;border:1px solid #c4c4c4;border-top:0"></div>
<div class="a" style="left:146px;top:114px;width:13px;height:1px;background:#b4b4b4;"></div>
<div class="a" style="left:146px;top:481.5px;width:13px;height:13px;background:#fff;border:1px solid #c0c0c0"></div>
<svg class="a" style="left:150px;top:486px" width="6" height="4" viewBox="0 0 6 4"><path d="M0 0.300L3 3.700L6 0.300z" fill="#222"/></svg>
<div class="a" style="left:161px;top:101px;width:1px;height:394px;background:#d6d6d6;"></div>
<span class="x" style="left:10.0px;top:113.15px;font-size:12.2px;color:#c2482b;transform:scaleX(1.000) rotate(.03deg);">1</span>
<span class="x" style="left:9.3px;top:186.15px;font-size:12.2px;color:#595959;transform:scaleX(1.000) rotate(.03deg);">2</span>
<span class="x" style="left:9.3px;top:260.15px;font-size:12.2px;color:#595959;transform:scaleX(1.000) rotate(.03deg);">3</span>
<span class="x" style="left:9.3px;top:334.15px;font-size:12.2px;color:#595959;transform:scaleX(1.000) rotate(.03deg);">4</span>
<span class="x" style="left:9.3px;top:408.15px;font-size:12.2px;color:#595959;transform:scaleX(1.000) rotate(.03deg);">5</span>
<span class="x" style="left:9.3px;top:481.15px;font-size:12.2px;color:#595959;transform:scaleX(1.000) rotate(.03deg);">6</span>
<svg class="a" style="left:24px;top:112px" width="110" height="65" viewBox="0 0 110 65"><rect x="3.250" y="2.650" width="103" height="59.100" fill="#fff" stroke="#b7472a" stroke-width="2.500"/></svg>
<div class="a" style="left:27px;top:189px;width:103px;height:59px;background:#fff;border:1px solid #e1e1e1"></div>
<div class="a" style="left:27px;top:262px;width:103px;height:59px;background:#fff;border:1px solid #e1e1e1"></div>
<div class="a" style="left:27px;top:336px;width:103px;height:59px;background:#fff;border:1px solid #e1e1e1"></div>
<div class="a" style="left:27px;top:410px;width:103px;height:59px;background:#fff;border:1px solid #e1e1e1"></div>
<div class="a" style="left:27px;top:484px;width:103px;height:59px;background:#fff;border:1px solid #e1e1e1"></div>
<span class="x" style="left:32.5px;top:121.60px;font-size:5.3px;color:#1a1a1a;font-weight:700;transform:scaleX(0.802) rotate(.03deg);">Harvey Balls</span>
<svg class="a" style="left:0px;top:116px" width="131" height="57" viewBox="0 0 131 57"><path d="M32.80 13.30h45" stroke="#8c8c8c" stroke-width="0.6" stroke-dasharray="2.1 0.5 1.4 0.5 2.8 0.5 1.8 0.5" fill="none"/><path d="M32.80 15.20h30" stroke="#8c8c8c" stroke-width="0.6" stroke-dasharray="2.1 0.5 1.4 0.5 2.8 0.5 1.8 0.5" fill="none"/><rect x="33.300" y="25" width="91.500" height="27" rx="1.500" fill="#fafafa"/><circle cx="42.40" cy="24.400" r="4.100" fill="#fff"/><circle cx="42.4" cy="24.4" r="3.55" fill="#0473ff"/><path d="M42.4 24.4L42.40 20.85A3.55 3.55 0 0 1 45.79 23.36z" fill="#02e8c3"/><path d="M37.15 33.20h10.5" stroke="#444" stroke-width="0.8" stroke-dasharray="2.1 0.5 1.4 0.5 2.8 0.5 1.8 0.5" fill="none"/><path d="M35.15 37.50h14.5" stroke="#c0c0c0" stroke-width="0.6" stroke-dasharray="2.1 0.5 1.4 0.5 2.8 0.5 1.8 0.5" fill="none"/><path d="M35.40 38.86h14" stroke="#c0c0c0" stroke-width="0.6" stroke-dasharray="2.1 0.5 1.4 0.5 2.8 0.5 1.8 0.5" fill="none"/><path d="M35.25 40.22h14.3" stroke="#c0c0c0" stroke-width="0.6" stroke-dasharray="2.1 0.5 1.4 0.5 2.8 0.5 1.8 0.5" fill="none"/><path d="M35.75 41.58h13.3" stroke="#c0c0c0" stroke-width="0.6" stroke-dasharray="2.1 0.5 1.4 0.5 2.8 0.5 1.8 0.5" fill="none"/><path d="M36.90 42.94h11" stroke="#c0c0c0" stroke-width="0.6" stroke-dasharray="2.1 0.5 1.4 0.5 2.8 0.5 1.8 0.5" fill="none"/><path d="M35.40 44.30h14" stroke="#c0c0c0" stroke-width="0.6" stroke-dasharray="2.1 0.5 1.4 0.5 2.8 0.5 1.8 0.5" fill="none"/><circle cx="60.67" cy="24.400" r="4.100" fill="#fff"/><circle cx="60.67" cy="24.4" r="3.55" fill="#0473ff"/><path d="M60.67 24.4L60.67 20.85A3.55 3.55 0 0 1 64.06 23.36z" fill="#02e8c3"/><path d="M55.42 33.20h10.5" stroke="#444" stroke-width="0.8" stroke-dasharray="2.1 0.5 1.4 0.5 2.8 0.5 1.8 0.5" fill="none"/><path d="M53.42 37.50h14.5" stroke="#c0c0c0" stroke-width="0.6" stroke-dasharray="2.1 0.5 1.4 0.5 2.8 0.5 1.8 0.5" fill="none"/><path d="M53.67 38.86h14" stroke="#c0c0c0" stroke-width="0.6" stroke-dasharray="2.1 0.5 1.4 0.5 2.8 0.5 1.8 0.5" fill="none"/><path d="M53.52 40.22h14.3" stroke="#c0c0c0" stroke-width="0.6" stroke-dasharray="2.1 0.5 1.4 0.5 2.8 0.5 1.8 0.5" fill="none"/><path d="M54.02 41.58h13.3" stroke="#c0c0c0" stroke-width="0.6" stroke-dasharray="2.1 0.5 1.4 0.5 2.8 0.5 1.8 0.5" fill="none"/><path d="M55.17 42.94h11" stroke="#c0c0c0" stroke-width="0.6" stroke-dasharray="2.1 0.5 1.4 0.5 2.8 0.5 1.8 0.5" fill="none"/><path d="M53.67 44.30h14" stroke="#c0c0c0" stroke-width="0.6" stroke-dasharray="2.1 0.5 1.4 0.5 2.8 0.5 1.8 0.5" fill="none"/><circle cx="78.94" cy="24.400" r="4.100" fill="#fff"/><circle cx="78.94" cy="24.4" r="3.55" fill="#0473ff"/><path d="M78.94 24.4L78.94 20.85A3.55 3.55 0 0 1 80.94 27.33z" fill="#02e8c3"/><path d="M73.69 33.20h10.5" stroke="#444" stroke-width="0.8" stroke-dasharray="2.1 0.5 1.4 0.5 2.8 0.5 1.8 0.5" fill="none"/><path d="M71.69 37.50h14.5" stroke="#c0c0c0" stroke-width="0.6" stroke-dasharray="2.1 0.5 1.4 0.5 2.8 0.5 1.8 0.5" fill="none"/><path d="M71.94 38.86h14" stroke="#c0c0c0" stroke-width="0.6" stroke-dasharray="2.1 0.5 1.4 0.5 2.8 0.5 1.8 0.5" fill="none"/><path d="M71.79 40.22h14.3" stroke="#c0c0c0" stroke-width="0.6" stroke-dasharray="2.1 0.5 1.4 0.5 2.8 0.5 1.8 0.5" fill="none"/><path d="M72.29 41.58h13.3" stroke="#c0c0c0" stroke-width="0.6" stroke-dasharray="2.1 0.5 1.4 0.5 2.8 0.5 1.8 0.5" fill="none"/><path d="M73.44 42.94h11" stroke="#c0c0c0" stroke-width="0.6" stroke-dasharray="2.1 0.5 1.4 0.5 2.8 0.5 1.8 0.5" fill="none"/><path d="M71.94 44.30h14" stroke="#c0c0c0" stroke-width="0.6" stroke-dasharray="2.1 0.5 1.4 0.5 2.8 0.5 1.8 0.5" fill="none"/><circle cx="97.21" cy="24.400" r="4.100" fill="#fff"/><circle cx="97.21" cy="24.4" r="3.55" fill="#0473ff"/><path d="M97.21 24.4L97.21 20.85A3.55 3.55 0 1 1 95.17 27.31z" fill="#02e8c3"/><path d="M91.96 33.20h10.5" stroke="#444" stroke-width="0.8" stroke-dasharray="2.1 0.5 1.4 0.5 2.8 0.5 1.8 0.5" fill="none"/><path d="M89.96 37.50h14.5" stroke="#c0c0c0" stroke-width="0.6" stroke-dasharray="2.1 0.5 1.4 0.5 2.8 0.5 1.8 0.5" fill="none"/><path d="M90.21 38.86h14" stroke="#c0c0c0" stroke-width="0.6" stroke-dasharray="2.1 0.5 1.4 0.5 2.8 0.5 1.8 0.5" fill="none"/><path d="M90.06 40.22h14.3" stroke="#c0c0c0" stroke-width="0.6" stroke-dasharray="2.1 0.5 1.4 0.5 2.8 0.5 1.8 0.5" fill="none"/><path d="M90.56 41.58h13.3" stroke="#c0c0c0" stroke-width="0.6" stroke-dasharray="2.1 0.5 1.4 0.5 2.8 0.5 1.8 0.5" fill="none"/><path d="M91.71 42.94h11" stroke="#c0c0c0" stroke-width="0.6" stroke-dasharray="2.1 0.5 1.4 0.5 2.8 0.5 1.8 0.5" fill="none"/><path d="M90.21 44.30h14" stroke="#c0c0c0" stroke-width="0.6" stroke-dasharray="2.1 0.5 1.4 0.5 2.8 0.5 1.8 0.5" fill="none"/><circle cx="115.48" cy="24.400" r="4.100" fill="#fff"/><circle cx="115.48" cy="24.4" r="3.55" fill="#0473ff"/><path d="M115.48 24.4L115.48 20.85A3.55 3.55 0 1 1 112.10 23.30z" fill="#02e8c3"/><path d="M110.23 33.20h10.5" stroke="#444" stroke-width="0.8" stroke-dasharray="2.1 0.5 1.4 0.5 2.8 0.5 1.8 0.5" fill="none"/><path d="M108.23 37.50h14.5" stroke="#c0c0c0" stroke-width="0.6" stroke-dasharray="2.1 0.5 1.4 0.5 2.8 0.5 1.8 0.5" fill="none"/><path d="M108.48 38.86h14" stroke="#c0c0c0" stroke-width="0.6" stroke-dasharray="2.1 0.5 1.4 0.5 2.8 0.5 1.8 0.5" fill="none"/><path d="M108.33 40.22h14.3" stroke="#c0c0c0" stroke-width="0.6" stroke-dasharray="2.1 0.5 1.4 0.5 2.8 0.5 1.8 0.5" fill="none"/><path d="M108.83 41.58h13.3" stroke="#c0c0c0" stroke-width="0.6" stroke-dasharray="2.1 0.5 1.4 0.5 2.8 0.5 1.8 0.5" fill="none"/><path d="M109.98 42.94h11" stroke="#c0c0c0" stroke-width="0.6" stroke-dasharray="2.1 0.5 1.4 0.5 2.8 0.5 1.8 0.5" fill="none"/><path d="M108.48 44.30h14" stroke="#c0c0c0" stroke-width="0.6" stroke-dasharray="2.1 0.5 1.4 0.5 2.8 0.5 1.8 0.5" fill="none"/></svg>
<span class="x" style="left:32.5px;top:193.60px;font-size:5.3px;color:#1a1a1a;font-weight:700;transform:scaleX(0.802) rotate(.03deg);">Harvey Balls</span>
<svg class="a" style="left:0px;top:189.7px" width="131" height="57" viewBox="0 0 131 57"><path d="M33.00 11.50h38" stroke="#8c8c8c" stroke-width="0.6" stroke-dasharray="2.1 0.5 1.4 0.5 2.8 0.5 1.8 0.5" fill="none"/><path d="M33.00 13.40h36" stroke="#8c8c8c" stroke-width="0.6" stroke-dasharray="2.1 0.5 1.4 0.5 2.8 0.5 1.8 0.5" fill="none"/><circle cx="33.700" cy="20.60" r="1.600" fill="#1a1a1a"/><path d="M37.00 20.25h10" stroke="#555" stroke-width="0.7" stroke-dasharray="2.1 0.5 1.4 0.5 2.8 0.5 1.8 0.5" fill="none"/><path d="M37.00 22.90h35" stroke="#c4c4c4" stroke-width="0.6" stroke-dasharray="2.1 0.5 1.4 0.5 2.8 0.5 1.8 0.5" fill="none"/><path d="M37.00 24.50h35" stroke="#c8c8c8" stroke-width="0.6" stroke-dasharray="2.1 0.5 1.4 0.5 2.8 0.5 1.8 0.5" fill="none"/><path d="M37.00 25.80h13" stroke="#d0d0d0" stroke-width="0.6" stroke-dasharray="2.1 0.5 1.4 0.5 2.8 0.5 1.8 0.5" fill="none"/><circle cx="33.700" cy="29.30" r="1.600" fill="#1a1a1a"/><path d="M37.00 28.95h10" stroke="#555" stroke-width="0.7" stroke-dasharray="2.1 0.5 1.4 0.5 2.8 0.5 1.8 0.5" fill="none"/><path d="M37.00 31.60h35" stroke="#c4c4c4" stroke-width="0.6" stroke-dasharray="2.1 0.5 1.4 0.5 2.8 0.5 1.8 0.5" fill="none"/><path d="M37.00 33.20h13" stroke="#c8c8c8" stroke-width="0.6" stroke-dasharray="2.1 0.5 1.4 0.5 2.8 0.5 1.8 0.5" fill="none"/><circle cx="33.700" cy="38.00" r="1.600" fill="#1a1a1a"/><path d="M37.00 37.65h10" stroke="#555" stroke-width="0.7" stroke-dasharray="2.1 0.5 1.4 0.5 2.8 0.5 1.8 0.5" fill="none"/><path d="M37.00 40.30h35" stroke="#c4c4c4" stroke-width="0.6" stroke-dasharray="2.1 0.5 1.4 0.5 2.8 0.5 1.8 0.5" fill="none"/><path d="M37.00 41.90h35" stroke="#c8c8c8" stroke-width="0.6" stroke-dasharray="2.1 0.5 1.4 0.5 2.8 0.5 1.8 0.5" fill="none"/><path d="M37.00 43.20h13" stroke="#d0d0d0" stroke-width="0.6" stroke-dasharray="2.1 0.5 1.4 0.5 2.8 0.5 1.8 0.5" fill="none"/><circle cx="33.700" cy="46.70" r="1.600" fill="#1a1a1a"/><path d="M37.00 46.35h10" stroke="#555" stroke-width="0.7" stroke-dasharray="2.1 0.5 1.4 0.5 2.8 0.5 1.8 0.5" fill="none"/><path d="M37.00 49.00h35" stroke="#c4c4c4" stroke-width="0.6" stroke-dasharray="2.1 0.5 1.4 0.5 2.8 0.5 1.8 0.5" fill="none"/><path d="M37.00 50.60h13" stroke="#c8c8c8" stroke-width="0.6" stroke-dasharray="2.1 0.5 1.4 0.5 2.8 0.5 1.8 0.5" fill="none"/><rect x="76.300" y="3.800" width="48.500" height="48.500" rx="1.500" fill="#fafafa"/><rect x="78.60" y="6.30" width="20.400" height="19.800" rx="1.500" fill="#fff" stroke="#f0f0f0" stroke-width="0.400"/><rect x="80.50" y="8.50" width="1.600" height="1.400" fill="#bbb"/><circle cx="88.8" cy="16.1" r="5.9" fill="#1d5f86"/><path d="M88.8 16.1L88.80 10.20A5.9 5.9 0 0 1 94.70 16.10z" fill="#ff8a1e"/><rect x="102.80" y="6.30" width="20.400" height="19.800" rx="1.500" fill="#fff" stroke="#f0f0f0" stroke-width="0.400"/><rect x="104.70" y="8.50" width="1.600" height="1.400" fill="#bbb"/><circle cx="113" cy="16.1" r="5.9" fill="#1d5f86"/><path d="M113 16.1L113.00 10.20A5.9 5.9 0 0 1 113.00 22.00z" fill="#ff8a1e"/><rect x="78.60" y="30.00" width="20.400" height="19.800" rx="1.500" fill="#fff" stroke="#f0f0f0" stroke-width="0.400"/><rect x="80.50" y="32.20" width="1.600" height="1.400" fill="#bbb"/><circle cx="88.8" cy="39.8" r="5.9" fill="#ff8a1e"/><path d="M88.8 39.8L82.90 39.80A5.9 5.9 0 0 1 88.80 33.90z" fill="#1d5f86"/><rect x="102.80" y="30.00" width="20.400" height="19.800" rx="1.500" fill="#fff" stroke="#f0f0f0" stroke-width="0.400"/><rect x="104.70" y="32.20" width="1.600" height="1.400" fill="#bbb"/><circle cx="113" cy="39.8" r="5.9" fill="#ff8a1e"/></svg>
<span class="x" style="left:32.1px;top:265.75px;font-size:5px;color:#1a1a1a;font-weight:700;transform:scaleX(0.893) rotate(.03deg);">Harvey</span>
<span class="x" style="left:32.1px;top:270.75px;font-size:5px;color:#1a1a1a;font-weight:700;transform:scaleX(0.870) rotate(.03deg);">Balls</span>
<svg class="a" style="left:0px;top:263.4px" width="131" height="57" viewBox="0 0 131 57"><path d="M52.00 5.10h22" stroke="#888" stroke-width="0.6" stroke-dasharray="2.1 0.5 1.4 0.5 2.8 0.5 1.8 0.5" fill="none"/><path d="M52.00 7.00h22" stroke="#888" stroke-width="0.6" stroke-dasharray="2.1 0.5 1.4 0.5 2.8 0.5 1.8 0.5" fill="none"/><path d="M52.00 8.90h25" stroke="#888" stroke-width="0.6" stroke-dasharray="2.1 0.5 1.4 0.5 2.8 0.5 1.8 0.5" fill="none"/><path d="M52.00 10.80h5" stroke="#888" stroke-width="0.6" stroke-dasharray="2.1 0.5 1.4 0.5 2.8 0.5 1.8 0.5" fill="none"/><rect x="32.60" y="15.200" width="21.800" height="37.500" rx="1.800" fill="#fcfcfc" stroke="#ececec" stroke-width="0.500"/><rect x="32.90" y="15.500" width="21.200" height="18" rx="1.600" fill="#fff"/><circle cx="43.5" cy="23.3" r="5.8" fill="#166a2a"/><path d="M43.5 23.3L43.50 17.50A5.8 5.8 0 0 1 49.30 23.30z" fill="#ff4a60"/><path d="M38.50 32.75h10" stroke="#666" stroke-width="0.7" stroke-dasharray="2.1 0.5 1.4 0.5 2.8 0.5 1.8 0.5" fill="none"/><path d="M36.50 37.70h14" stroke="#c4c4c4" stroke-width="0.6" stroke-dasharray="2.1 0.5 1.4 0.5 2.8 0.5 1.8 0.5" fill="none"/><path d="M37.00 39.06h13" stroke="#c4c4c4" stroke-width="0.6" stroke-dasharray="2.1 0.5 1.4 0.5 2.8 0.5 1.8 0.5" fill="none"/><path d="M36.50 40.42h14" stroke="#c4c4c4" stroke-width="0.6" stroke-dasharray="2.1 0.5 1.4 0.5 2.8 0.5 1.8 0.5" fill="none"/><path d="M37.50 41.78h12" stroke="#c4c4c4" stroke-width="0.6" stroke-dasharray="2.1 0.5 1.4 0.5 2.8 0.5 1.8 0.5" fill="none"/><path d="M38.00 43.14h11" stroke="#c4c4c4" stroke-width="0.6" stroke-dasharray="2.1 0.5 1.4 0.5 2.8 0.5 1.8 0.5" fill="none"/><path d="M37.00 44.50h13" stroke="#c4c4c4" stroke-width="0.6" stroke-dasharray="2.1 0.5 1.4 0.5 2.8 0.5 1.8 0.5" fill="none"/><rect x="56.20" y="15.200" width="21.800" height="37.500" rx="1.800" fill="#fcfcfc" stroke="#ececec" stroke-width="0.500"/><rect x="56.50" y="15.500" width="21.200" height="18" rx="1.600" fill="#fff"/><circle cx="67.1" cy="23.3" r="5.8" fill="#166a2a"/><path d="M67.1 23.3L67.10 17.50A5.8 5.8 0 0 1 67.10 29.10z" fill="#ff4a60"/><path d="M62.10 32.75h10" stroke="#666" stroke-width="0.7" stroke-dasharray="2.1 0.5 1.4 0.5 2.8 0.5 1.8 0.5" fill="none"/><path d="M60.10 37.70h14" stroke="#c4c4c4" stroke-width="0.6" stroke-dasharray="2.1 0.5 1.4 0.5 2.8 0.5 1.8 0.5" fill="none"/><path d="M60.60 39.06h13" stroke="#c4c4c4" stroke-width="0.6" stroke-dasharray="2.1 0.5 1.4 0.5 2.8 0.5 1.8 0.5" fill="none"/><path d="M60.10 40.42h14" stroke="#c4c4c4" stroke-width="0.6" stroke-dasharray="2.1 0.5 1.4 0.5 2.8 0.5 1.8 0.5" fill="none"/><path d="M61.10 41.78h12" stroke="#c4c4c4" stroke-width="0.6" stroke-dasharray="2.1 0.5 1.4 0.5 2.8 0.5 1.8 0.5" fill="none"/><path d="M61.60 43.14h11" stroke="#c4c4c4" stroke-width="0.6" stroke-dasharray="2.1 0.5 1.4 0.5 2.8 0.5 1.8 0.5" fill="none"/><path d="M60.60 44.50h13" stroke="#c4c4c4" stroke-width="0.6" stroke-dasharray="2.1 0.5 1.4 0.5 2.8 0.5 1.8 0.5" fill="none"/><rect x="79.80" y="15.200" width="21.800" height="37.500" rx="1.800" fill="#fcfcfc" stroke="#ececec" stroke-width="0.500"/><rect x="80.10" y="15.500" width="21.200" height="18" rx="1.600" fill="#fff"/><circle cx="90.7" cy="23.3" r="5.8" fill="#ff4a60"/><path d="M90.7 23.3L84.90 23.30A5.8 5.8 0 0 1 90.70 17.50z" fill="#166a2a"/><path d="M85.70 32.75h10" stroke="#666" stroke-width="0.7" stroke-dasharray="2.1 0.5 1.4 0.5 2.8 0.5 1.8 0.5" fill="none"/><path d="M83.70 37.70h14" stroke="#c4c4c4" stroke-width="0.6" stroke-dasharray="2.1 0.5 1.4 0.5 2.8 0.5 1.8 0.5" fill="none"/><path d="M84.20 39.06h13" stroke="#c4c4c4" stroke-width="0.6" stroke-dasharray="2.1 0.5 1.4 0.5 2.8 0.5 1.8 0.5" fill="none"/><path d="M83.70 40.42h14" stroke="#c4c4c4" stroke-width="0.6" stroke-dasharray="2.1 0.5 1.4 0.5 2.8 0.5 1.8 0.5" fill="none"/><path d="M84.70 41.78h12" stroke="#c4c4c4" stroke-width="0.6" stroke-dasharray="2.1 0.5 1.4 0.5 2.8 0.5 1.8 0.5" fill="none"/><path d="M85.20 43.14h11" stroke="#c4c4c4" stroke-width="0.6" stroke-dasharray="2.1 0.5 1.4 0.5 2.8 0.5 1.8 0.5" fill="none"/><path d="M84.20 44.50h13" stroke="#c4c4c4" stroke-width="0.6" stroke-dasharray="2.1 0.5 1.4 0.5 2.8 0.5 1.8 0.5" fill="none"/><rect x="103.40" y="15.200" width="21.800" height="37.500" rx="1.800" fill="#fcfcfc" stroke="#ececec" stroke-width="0.500"/><rect x="103.70" y="15.500" width="21.200" height="18" rx="1.600" fill="#fff"/><circle cx="114.3" cy="23.3" r="5.8" fill="#ff4a60"/><path d="M109.30 32.75h10" stroke="#666" stroke-width="0.7" stroke-dasharray="2.1 0.5 1.4 0.5 2.8 0.5 1.8 0.5" fill="none"/><path d="M107.30 37.70h14" stroke="#c4c4c4" stroke-width="0.6" stroke-dasharray="2.1 0.5 1.4 0.5 2.8 0.5 1.8 0.5" fill="none"/><path d="M107.80 39.06h13" stroke="#c4c4c4" stroke-width="0.6" stroke-dasharray="2.1 0.5 1.4 0.5 2.8 0.5 1.8 0.5" fill="none"/><path d="M107.30 40.42h14" stroke="#c4c4c4" stroke-width="0.6" stroke-dasharray="2.1 0.5 1.4 0.5 2.8 0.5 1.8 0.5" fill="none"/><path d="M108.30 41.78h12" stroke="#c4c4c4" stroke-width="0.6" stroke-dasharray="2.1 0.5 1.4 0.5 2.8 0.5 1.8 0.5" fill="none"/><path d="M108.80 43.14h11" stroke="#c4c4c4" stroke-width="0.6" stroke-dasharray="2.1 0.5 1.4 0.5 2.8 0.5 1.8 0.5" fill="none"/><path d="M107.80 44.50h13" stroke="#c4c4c4" stroke-width="0.6" stroke-dasharray="2.1 0.5 1.4 0.5 2.8 0.5 1.8 0.5" fill="none"/></svg>
<span class="x" style="left:31.9px;top:355.75px;font-size:5px;color:#1a1a1a;font-weight:700;transform:scaleX(0.893) rotate(.03deg);">Harvey</span>
<span class="x" style="left:31.9px;top:360.75px;font-size:5px;color:#1a1a1a;font-weight:700;transform:scaleX(0.870) rotate(.03deg);">Balls</span>
<svg class="a" style="left:0px;top:337.1px" width="131" height="57" viewBox="0 0 131 57"><path d="M32.50 31.50h30" stroke="#aaa" stroke-width="0.6" stroke-dasharray="2.1 0.5 1.4 0.5 2.8 0.5 1.8 0.5" fill="none"/><path d="M32.50 32.90h35" stroke="#aaa" stroke-width="0.6" stroke-dasharray="2.1 0.5 1.4 0.5 2.8 0.5 1.8 0.5" fill="none"/><path d="M32.50 34.30h8" stroke="#bbb" stroke-width="0.6" stroke-dasharray="2.1 0.5 1.4 0.5 2.8 0.5 1.8 0.5" fill="none"/><rect x="73.7" y="3.800" width="24.700" height="48.300" rx="1.500" fill="#0a6cff"/><rect x="76.00" y="6.300" width="20.200" height="19.800" rx="1" fill="#fff"/><circle cx="86.1" cy="14.2" r="5.6" fill="#cfcfcf"/><path d="M86.1 14.2L86.10 8.60A5.6 5.6 0 0 1 91.70 14.20z" fill="#e6e6e6"/><rect x="84.60" y="22" width="3" height="0.600" fill="#777"/><path d="M76.30 31.95h10" stroke="#fff" stroke-width="0.7" stroke-dasharray="2.1 0.5 1.4 0.5 2.8 0.5 1.8 0.5" fill="none"/><g opacity="0.75"><path d="M76.30 37.55h14" stroke="#fff" stroke-width="0.5" stroke-dasharray="2.1 0.5 1.4 0.5 2.8 0.5 1.8 0.5" fill="none"/><path d="M76.30 38.95h18.5" stroke="#fff" stroke-width="0.5" stroke-dasharray="2.1 0.5 1.4 0.5 2.8 0.5 1.8 0.5" fill="none"/><path d="M76.30 41.75h14" stroke="#fff" stroke-width="0.5" stroke-dasharray="2.1 0.5 1.4 0.5 2.8 0.5 1.8 0.5" fill="none"/></g><rect x="100.4" y="3.800" width="24.700" height="48.300" rx="1.500" fill="#ff4a60"/><rect x="102.70" y="6.300" width="20.200" height="19.800" rx="1" fill="#fff"/><circle cx="112.8" cy="14.2" r="5.6" fill="#cfcfcf"/><path d="M112.8 14.2L112.80 8.60A5.6 5.6 0 0 1 118.40 14.20z" fill="#e6e6e6"/><rect x="111.30" y="22" width="3" height="0.600" fill="#777"/><path d="M103.00 31.95h10" stroke="#fff" stroke-width="0.7" stroke-dasharray="2.1 0.5 1.4 0.5 2.8 0.5 1.8 0.5" fill="none"/><g opacity="0.75"><path d="M103.00 37.55h14" stroke="#fff" stroke-width="0.5" stroke-dasharray="2.1 0.5 1.4 0.5 2.8 0.5 1.8 0.5" fill="none"/><path d="M103.00 38.95h18.5" stroke="#fff" stroke-width="0.5" stroke-dasharray="2.1 0.5 1.4 0.5 2.8 0.5 1.8 0.5" fill="none"/><path d="M103.00 41.75h14" stroke="#fff" stroke-width="0.5" stroke-dasharray="2.1 0.5 1.4 0.5 2.8 0.5 1.8 0.5" fill="none"/></g><circle cx="99.700" cy="20.200" r="2.200" fill="#111"/><circle cx="99.200" cy="19.700" r="0.600" fill="#999"/></svg>
<span class="x" style="left:31.9px;top:443.75px;font-size:5px;color:#1a1a1a;font-weight:700;transform:scaleX(0.893) rotate(.03deg);">Harvey</span>
<span class="x" style="left:31.9px;top:448.75px;font-size:5px;color:#1a1a1a;font-weight:700;transform:scaleX(0.870) rotate(.03deg);">Balls</span>
<svg class="a" style="left:0px;top:410.9px" width="131" height="57" viewBox="0 0 131 57"><path d="M32.50 44.90h22" stroke="#777" stroke-width="0.6" stroke-dasharray="2.1 0.5 1.4 0.5 2.8 0.5 1.8 0.5" fill="none"/><path d="M32.50 46.80h23" stroke="#777" stroke-width="0.6" stroke-dasharray="2.1 0.5 1.4 0.5 2.8 0.5 1.8 0.5" fill="none"/><path d="M32.50 48.70h24" stroke="#777" stroke-width="0.6" stroke-dasharray="2.1 0.5 1.4 0.5 2.8 0.5 1.8 0.5" fill="none"/><path d="M32.50 50.60h5" stroke="#777" stroke-width="0.6" stroke-dasharray="2.1 0.5 1.4 0.5 2.8 0.5 1.8 0.5" fill="none"/><rect x="64.500" y="3.90" width="60.500" height="14.700" rx="1.200" fill="#1d5f86"/><rect x="64.900" y="4.10" width="15.800" height="14.300" rx="1.200" fill="#fff" stroke="#1d5f86" stroke-width="0.600"/><circle cx="72.6" cy="11.3" r="5.4" fill="#d0d0d0"/><path d="M72.6 11.3L72.60 5.90A5.4 5.4 0 0 1 78.00 11.30z" fill="#e8e8e8"/><rect x="119.500" y="5.20" width="5" height="3.600" fill="#fff"/><path d="M83.50 7.05h10" stroke="#fff" stroke-width="0.7" stroke-dasharray="2.1 0.5 1.4 0.5 2.8 0.5 1.8 0.5" fill="none"/><g opacity="0.7"><path d="M83.50 11.05h33" stroke="#fff" stroke-width="0.5" stroke-dasharray="2.1 0.5 1.4 0.5 2.8 0.5 1.8 0.5" fill="none"/><path d="M83.50 12.35h33" stroke="#fff" stroke-width="0.5" stroke-dasharray="2.1 0.5 1.4 0.5 2.8 0.5 1.8 0.5" fill="none"/><path d="M83.50 13.95h13" stroke="#fff" stroke-width="0.5" stroke-dasharray="2.1 0.5 1.4 0.5 2.8 0.5 1.8 0.5" fill="none"/></g><rect x="64.500" y="20.90" width="60.500" height="14.700" rx="1.200" fill="#1e6b2b"/><rect x="64.900" y="21.10" width="15.800" height="14.300" rx="1.200" fill="#fff" stroke="#1e6b2b" stroke-width="0.600"/><circle cx="72.6" cy="28.3" r="5.4" fill="#d0d0d0"/><path d="M72.6 28.3L72.60 22.90A5.4 5.4 0 0 1 72.60 33.70z" fill="#e8e8e8"/><rect x="119.500" y="22.20" width="5" height="3.600" fill="#fff"/><path d="M83.50 24.05h10" stroke="#fff" stroke-width="0.7" stroke-dasharray="2.1 0.5 1.4 0.5 2.8 0.5 1.8 0.5" fill="none"/><g opacity="0.7"><path d="M83.50 28.05h33" stroke="#fff" stroke-width="0.5" stroke-dasharray="2.1 0.5 1.4 0.5 2.8 0.5 1.8 0.5" fill="none"/><path d="M83.50 29.35h33" stroke="#fff" stroke-width="0.5" stroke-dasharray="2.1 0.5 1.4 0.5 2.8 0.5 1.8 0.5" fill="none"/><path d="M83.50 30.95h13" stroke="#fff" stroke-width="0.5" stroke-dasharray="2.1 0.5 1.4 0.5 2.8 0.5 1.8 0.5" fill="none"/></g><rect x="64.500" y="37.90" width="60.500" height="14.700" rx="1.200" fill="#ff8a1e"/><rect x="64.900" y="38.10" width="15.800" height="14.300" rx="1.200" fill="#fff" stroke="#ff8a1e" stroke-width="0.600"/><circle cx="72.6" cy="45.3" r="5.4" fill="#e8e8e8"/><path d="M72.6 45.3L67.20 45.30A5.4 5.4 0 0 1 72.60 39.90z" fill="#d0d0d0"/><rect x="119.500" y="39.20" width="5" height="3.600" fill="#fff"/><path d="M83.50 41.05h10" stroke="#fff" stroke-width="0.7" stroke-dasharray="2.1 0.5 1.4 0.5 2.8 0.5 1.8 0.5" fill="none"/><g opacity="0.7"><path d="M83.50 45.05h33" stroke="#fff" stroke-width="0.5" stroke-dasharray="2.1 0.5 1.4 0.5 2.8 0.5 1.8 0.5" fill="none"/><path d="M83.50 46.35h25" stroke="#fff" stroke-width="0.5" stroke-dasharray="2.1 0.5 1.4 0.5 2.8 0.5 1.8 0.5" fill="none"/></g></svg>
<span class="x" style="left:31.9px;top:487.60px;font-size:5.3px;color:#1a1a1a;font-weight:700;transform:scaleX(0.783) rotate(.03deg);">Harvey Balls</span>
<svg class="a" style="left:0px;top:484.6px" width="131" height="10" viewBox="0 0 131 10"><path d="M63.00 6.00h60.5" stroke="#999" stroke-width="0.6" stroke-dasharray="2.1 0.5 1.4 0.5 2.8 0.5 1.8 0.5" fill="none"/><path d="M63.00 7.50h15" stroke="#999" stroke-width="0.6" stroke-dasharray="2.1 0.5 1.4 0.5 2.8 0.5 1.8 0.5" fill="none"/></svg>
<div class="a" style="left:271px;top:106px;width:632px;height:356px;background:#fff;border:1px solid #dadada"></div>
<span class="x" style="left:297.7px;top:145.75px;font-size:27px;color:#0d0d0d;font-weight:700;transform:scaleX(0.970) rotate(.03deg);">Harvey Balls</span>
<span class="x" style="left:297.7px;top:189.10px;font-size:8.3px;color:#555;transform:scaleX(1.111) rotate(.03deg);">Lorem ipsum dolor sed do sit amet, consectetur adipiscing elit, sed do</span>
<span class="x" style="left:297.7px;top:201.10px;font-size:8.3px;color:#555;transform:scaleX(1.106) rotate(.03deg);">eiusmod tempor sed re eu fugiat nulla pariatur.</span>
<div class="a" style="left:298px;top:260.5px;width:579.5px;height:176.5px;background:#fafafa;border-radius:9px"></div>
<svg class="a" style="left:272px;top:107px" width="630" height="200" viewBox="0 0 630 200"><circle cx="87.3" cy="154.400" r="26.500" fill="#fff"/><circle cx="87.3" cy="154.4" r="21.9" fill="#0473ff"/><path d="M87.3 154.4L87.30 132.50A21.9 21.9 0 0 1 108.24 148.00z" fill="#02e8c3"/><circle cx="202.5" cy="154.400" r="26.500" fill="#fff"/><circle cx="202.5" cy="154.4" r="21.9" fill="#0473ff"/><path d="M202.5 154.4L202.50 132.50A21.9 21.9 0 0 1 223.44 148.00z" fill="#02e8c3"/><circle cx="317.8" cy="154.400" r="26.500" fill="#fff"/><circle cx="317.8" cy="154.4" r="21.9" fill="#0473ff"/><path d="M317.8 154.4L317.80 132.50A21.9 21.9 0 0 1 330.14 172.49z" fill="#02e8c3"/><circle cx="433.0" cy="154.400" r="26.500" fill="#fff"/><circle cx="433" cy="154.4" r="21.9" fill="#0473ff"/><path d="M433 154.4L433.00 132.50A21.9 21.9 0 1 1 420.44 172.34z" fill="#02e8c3"/><circle cx="548.2" cy="154.400" r="26.500" fill="#fff"/><circle cx="548.2" cy="154.4" r="21.9" fill="#0473ff"/><path d="M548.2 154.4L548.20 132.50A21.9 21.9 0 1 1 527.37 147.63z" fill="#02e8c3"/></svg>
<span class="x" style="left:326.4px;top:309.75px;font-size:11px;color:#151515;font-weight:700;transform:scaleX(0.980) rotate(.03deg);">Subtitle here</span>
<span class="x" style="left:313.7px;top:341.15px;font-size:7.2px;color:#555;transform:scaleX(1.025) rotate(.03deg);">Lorem ipsum dolor sit amet,</span>
<span class="x" style="left:315.2px;top:350.15px;font-size:7.2px;color:#555;transform:scaleX(1.041) rotate(.03deg);">consectetur adipiscing elit.</span>
<span class="x" style="left:314.2px;top:358.15px;font-size:7.2px;color:#555;transform:scaleX(1.041) rotate(.03deg);">Curabitur sit amet purus ac</span>
<span class="x" style="left:317.2px;top:366.15px;font-size:7.2px;color:#555;transform:scaleX(1.018) rotate(.03deg);">mauris fermentum. Lorem</span>
<span class="x" style="left:325.0px;top:375.15px;font-size:7.2px;color:#555;transform:scaleX(1.030) rotate(.03deg);">ipsum dolor sit amet,</span>
<span class="x" style="left:315.2px;top:383.15px;font-size:7.2px;color:#555;transform:scaleX(1.041) rotate(.03deg);">consectetur adipiscing elit.</span>
<span class="x" style="left:441.6px;top:309.75px;font-size:11px;color:#151515;font-weight:700;transform:scaleX(0.980) rotate(.03deg);">Subtitle here</span>
<span class="x" style="left:428.9px;top:341.15px;font-size:7.2px;color:#555;transform:scaleX(1.025) rotate(.03deg);">Lorem ipsum dolor sit amet,</span>
<span class="x" style="left:430.4px;top:350.15px;font-size:7.2px;color:#555;transform:scaleX(1.041) rotate(.03deg);">consectetur adipiscing elit.</span>
<span class="x" style="left:429.4px;top:358.15px;font-size:7.2px;color:#555;transform:scaleX(1.041) rotate(.03deg);">Curabitur sit amet purus ac</span>
<span class="x" style="left:432.4px;top:366.15px;font-size:7.2px;color:#555;transform:scaleX(1.018) rotate(.03deg);">mauris fermentum. Lorem</span>
<span class="x" style="left:440.2px;top:375.15px;font-size:7.2px;color:#555;transform:scaleX(1.030) rotate(.03deg);">ipsum dolor sit amet,</span>
<span class="x" style="left:430.4px;top:383.15px;font-size:7.2px;color:#555;transform:scaleX(1.041) rotate(.03deg);">consectetur adipiscing elit.</span>
<span class="x" style="left:556.9px;top:309.75px;font-size:11px;color:#151515;font-weight:700;transform:scaleX(0.980) rotate(.03deg);">Subtitle here</span>
<span class="x" style="left:544.2px;top:341.15px;font-size:7.2px;color:#555;transform:scaleX(1.025) rotate(.03deg);">Lorem ipsum dolor sit amet,</span>
<span class="x" style="left:545.8px;top:350.15px;font-size:7.2px;color:#555;transform:scaleX(1.041) rotate(.03deg);">consectetur adipiscing elit.</span>
<span class="x" style="left:544.8px;top:358.15px;font-size:7.2px;color:#555;transform:scaleX(1.041) rotate(.03deg);">Curabitur sit amet purus ac</span>
<span class="x" style="left:547.8px;top:366.15px;font-size:7.2px;color:#555;transform:scaleX(1.018) rotate(.03deg);">mauris fermentum. Lorem</span>
<span class="x" style="left:555.5px;top:375.15px;font-size:7.2px;color:#555;transform:scaleX(1.030) rotate(.03deg);">ipsum dolor sit amet,</span>
<span class="x" style="left:545.8px;top:383.15px;font-size:7.2px;color:#555;transform:scaleX(1.041) rotate(.03deg);">consectetur adipiscing elit.</span>
<span class="x" style="left:672.1px;top:309.75px;font-size:11px;color:#151515;font-weight:700;transform:scaleX(0.980) rotate(.03deg);">Subtitle here</span>
<span class="x" style="left:659.4px;top:341.15px;font-size:7.2px;color:#555;transform:scaleX(1.025) rotate(.03deg);">Lorem ipsum dolor sit amet,</span>
<span class="x" style="left:661.0px;top:350.15px;font-size:7.2px;color:#555;transform:scaleX(1.041) rotate(.03deg);">consectetur adipiscing elit.</span>
<span class="x" style="left:660.0px;top:358.15px;font-size:7.2px;color:#555;transform:scaleX(1.041) rotate(.03deg);">Curabitur sit amet purus ac</span>
<span class="x" style="left:663.0px;top:366.15px;font-size:7.2px;color:#555;transform:scaleX(1.018) rotate(.03deg);">mauris fermentum. Lorem</span>
<span class="x" style="left:670.7px;top:375.15px;font-size:7.2px;color:#555;transform:scaleX(1.030) rotate(.03deg);">ipsum dolor sit amet,</span>
<span class="x" style="left:661.0px;top:383.15px;font-size:7.2px;color:#555;transform:scaleX(1.041) rotate(.03deg);">consectetur adipiscing elit.</span>
<span class="x" style="left:787.3px;top:309.75px;font-size:11px;color:#151515;font-weight:700;transform:scaleX(0.980) rotate(.03deg);">Subtitle here</span>
<span class="x" style="left:774.6px;top:341.15px;font-size:7.2px;color:#555;transform:scaleX(1.025) rotate(.03deg);">Lorem ipsum dolor sit amet,</span>
<span class="x" style="left:776.2px;top:350.15px;font-size:7.2px;color:#555;transform:scaleX(1.041) rotate(.03deg);">consectetur adipiscing elit.</span>
<span class="x" style="left:775.2px;top:358.15px;font-size:7.2px;color:#555;transform:scaleX(1.041) rotate(.03deg);">Curabitur sit amet purus ac</span>
<span class="x" style="left:778.2px;top:366.15px;font-size:7.2px;color:#555;transform:scaleX(1.018) rotate(.03deg);">mauris fermentum. Lorem</span>
<span class="x" style="left:785.9px;top:375.15px;font-size:7.2px;color:#555;transform:scaleX(1.030) rotate(.03deg);">ipsum dolor sit amet,</span>
<span class="x" style="left:776.2px;top:383.15px;font-size:7.2px;color:#555;transform:scaleX(1.041) rotate(.03deg);">consectetur adipiscing elit.</span>
<div class="a" style="left:162px;top:469px;width:862px;height:1px;background:#cfcfcf;"></div>
<span class="x" style="left:170.7px;top:476.10px;font-size:12.3px;color:#606060;transform:scaleX(0.947) rotate(.03deg);">Click to add notes</span>
<div class="a" style="left:1011px;top:101px;width:13px;height:325px;background:#f3f3f3;"></div>
<div class="a" style="left:1011px;top:101px;width:13px;height:13.5px;background:#fff;border:1px solid #c0c0c0;border-bottom-color:#a8a8a8"></div>
<svg class="a" style="left:1014.5px;top:105.3px" width="6" height="4" viewBox="0 0 6 4"><path d="M0 3.700L3 0.300L6 3.700z" fill="#222"/></svg>
<div class="a" style="left:1011px;top:114px;width:13px;height:29.5px;background:#fff;border:1px solid #c0c0c0;border-top:0"></div>
<div class="a" style="left:1011px;top:114px;width:13px;height:1px;background:#b4b4b4;"></div>
<div class="a" style="left:1011px;top:412px;width:13px;height:13.5px;background:#fff;border:1px solid #b8b8b8"></div>
<svg class="a" style="left:1014.5px;top:417px" width="6" height="4" viewBox="0 0 6 4"><path d="M0 0.300L3 3.700L6 0.300z" fill="#222"/></svg>
<svg class="a" style="left:1013.5px;top:427.7px" width="9" height="11" viewBox="0 0 9 11"><path d="M4.500 0.200L7.600 5.200H1.400zM4.500 3.600L8.300 10.300H0.700z" fill="#5e5e5e"/></svg>
<svg class="a" style="left:1013.5px;top:441.6px" width="9" height="11" viewBox="0 0 9 11"><path d="M0.700 0.200H8.300L4.500 6.900zM1.400 5.300H7.600L4.500 10.500z" fill="#5e5e5e"/></svg>
<div class="a" style="left:1011px;top:471.5px;width:13px;height:11.5px;background:#fff;border:1px solid #b8b8b8"></div>
<svg class="a" style="left:1014.5px;top:475.5px" width="6" height="4" viewBox="0 0 6 4"><path d="M0 3.700L3 0.300L6 3.700z" fill="#222"/></svg>
<div class="a" style="left:1011px;top:482.5px;width:13px;height:12px;background:#fff;border:1px solid #b8b8b8"></div>
<svg class="a" style="left:1014.5px;top:487px" width="6" height="4" viewBox="0 0 6 4"><path d="M0 0.300L3 3.700L6 0.300z" fill="#222"/></svg>
<div class="a" style="left:0px;top:495px;width:1024px;height:16px;background:#f3f3f3;"></div>
<span class="x" style="left:8.7px;top:500.75px;font-size:9px;color:#444;transform:scaleX(0.935) rotate(.03deg);">Slide 1 of 10</span>
<svg class="a" style="left:70px;top:499.5px" width="13" height="10" viewBox="0 0 13 10"><path d="M0.500 1h5.300v8h-5.300zM5.800 1h4.200v2.500M5.800 9h4.700v-2" fill="none" stroke="#8a8a8a" stroke-width="0.900"/><path d="M7.300 7.600l0.500-1.800L11.300 2.200l1.300 1.300L9 7.100z" fill="#f3f3f3" stroke="#777" stroke-width="0.800"/></svg>
<span class="x" style="left:94.7px;top:500.75px;font-size:9px;color:#444;transform:scaleX(0.921) rotate(.03deg);">English (India)</span>
<svg class="a" style="left:160.5px;top:498.5px" width="12" height="11" viewBox="0 0 12 11"><circle cx="5.500" cy="1.700" r="1.200" fill="none" stroke="#555" stroke-width="0.900"/><path d="M1.500 4.500c2 .7 6 .7 8 0M5.500 5v2.500M5.500 7.500L3.500 10.500M5.500 7.500l1 1.500" fill="none" stroke="#555" stroke-width="0.900"/><path d="M2.300 2.200A4.800 4.800 0 0 0 4 10" fill="none" stroke="#555" stroke-width="0.800"/><path d="M7 8.300l1.800 1.800 3-3.300" fill="none" stroke="#555" stroke-width="1.100"/></svg>
<span class="x" style="left:174.7px;top:500.75px;font-size:9px;color:#444;transform:scaleX(0.916) rotate(.03deg);">Accessibility: Good to go</span>
<svg class="a" style="left:620px;top:499px" width="11" height="10" viewBox="0 0 11 10"><path d="M5.500 0.300l2 2.200H3.500z" fill="#777"/><path d="M2.500 4.500h6M0.500 6.500h10M0.500 8.500h10" stroke="#7a7a7a" stroke-width="0.800"/></svg>
<span class="x" style="left:634.0px;top:500.75px;font-size:9px;color:#444;transform:scaleX(0.914) rotate(.03deg);">Notes</span>
<svg class="a" style="left:670.5px;top:498.5px" width="13" height="11" viewBox="0 0 13 11"><path d="M1 0.500h11a0.600 0.600 0 0 1 .6.600v6.400a0.600 0.600 0 0 1-.6.600H5.500L3 10.500V8.100H1a0.600 0.600 0 0 1-.6-.600V1.100A0.600 0.600 0 0 1 1 0.500z" fill="#4a4a4a"/></svg>
<span class="x" style="left:684.7px;top:500.75px;font-size:9px;color:#444;transform:scaleX(0.944) rotate(.03deg);">Comments</span>
<div class="a" style="left:741px;top:495px;width:31.3px;height:16px;background:#c6c6c6;"></div>
<svg class="a" style="left:751.5px;top:499.5px" width="11" height="10" viewBox="0 0 11 10"><rect x="0.400" y="0.400" width="10.200" height="9.200" rx="1" fill="none" stroke="#7a7a7a" stroke-width="0.800"/><path d="M2.300 0.400v9.200M2.300 6.400h8.300" stroke="#7a7a7a" stroke-width="0.800"/><rect x="4.800" y="2" width="3.700" height="2.700" fill="none" stroke="#8a8a8a" stroke-width="0.700"/></svg>
<svg class="a" style="left:783.5px;top:499.5px" width="11" height="11" viewBox="0 0 11 11"><g fill="none" stroke="#8e8e8e" stroke-width="0.800"><rect x="0.400" y="0.400" width="4.500" height="4.100"/><rect x="5.900" y="0.400" width="4.500" height="4.100"/><rect x="0.400" y="5.600" width="4.500" height="4.100"/><rect x="5.900" y="5.600" width="4.500" height="4.100"/></g></svg>
<svg class="a" style="left:816px;top:499.5px" width="11" height="10" viewBox="0 0 11 10"><path d="M0.400 1C2.300 0.500 3.800 0.700 5 1.400C6.200 0.700 7.700 0.500 9.600 1V9C7.700 8.500 6.200 8.700 5 9.400C3.800 8.700 2.300 8.500 0.400 9zM5 1.400v8" fill="none" stroke="#8e8e8e" stroke-width="0.800"/><path d="M1.500 3.200h2.500M1.500 5h2.500M1.500 6.800h2.500M6 3.200h2.500M6 5h2.500M6 6.800h2.500" stroke="#a0a0a0" stroke-width="0.700"/></svg>
<svg class="a" style="left:847.5px;top:499.5px" width="11" height="11" viewBox="0 0 11 11"><path d="M0.300 0.700h10.400" stroke="#6e6e6e" stroke-width="1.100"/><path d="M1.500 1v5.500h8V1M2.800 3.500h5.400M5.500 6.500v3M3.300 9.700h4.400" fill="none" stroke="#8e8e8e" stroke-width="0.800"/></svg>
<div class="a" style="left:872.5px;top:504px;width:5.5px;height:1px;background:#555;"></div>
<div class="a" style="left:883.5px;top:504.2px;width:79px;height:1px;background:#444;"></div>
<div class="a" style="left:923px;top:502px;width:1px;height:5.5px;background:#555;"></div>
<div class="a" style="left:914px;top:500px;width:4px;height:9px;background:#4a4a4a;border-radius:0.5px"></div>
<div class="a" style="left:967px;top:504.2px;width:6px;height:1px;background:#555;"></div>
<div class="a" style="left:969.5px;top:501.7px;width:1px;height:6px;background:#555;"></div>
<span class="x" style="left:982.7px;top:500.75px;font-size:9px;color:#444;transform:scaleX(0.949) rotate(.03deg);">82%</span>
<svg class="a" style="left:1012px;top:500px" width="9" height="9" viewBox="0 0 9 9"><rect x="0.500" y="0.500" width="7.800" height="7.800" rx="1.200" fill="none" stroke="#a3a3a3" stroke-width="0.900"/><path d="M4.400 0.500v7.800M0.500 4.400h7.800" stroke="#b0b0b0" stroke-width="0.900"/><rect x="3.400" y="3.400" width="2" height="2" fill="#f3f3f3"/></svg>
</div>
</body>
</html>
